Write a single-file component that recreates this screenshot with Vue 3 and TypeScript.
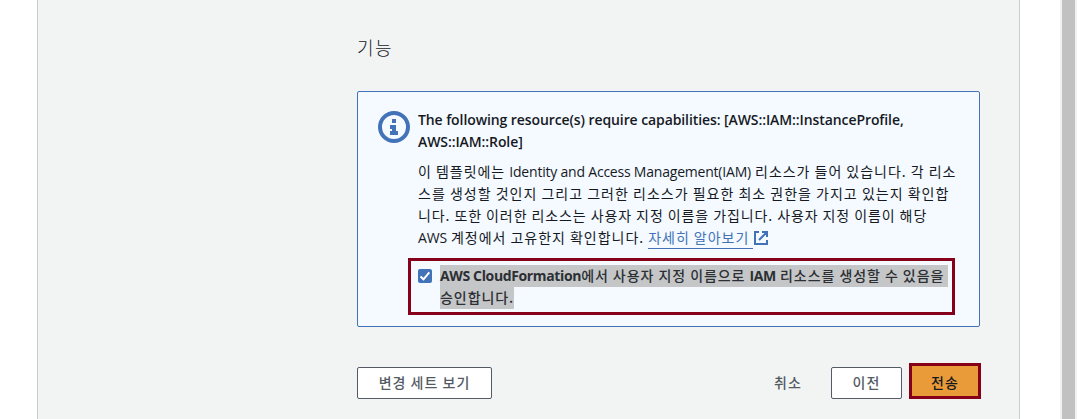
<script setup lang="ts">
interface Run {
  text: string
  latin?: boolean
}

const heading: string[] = [
  'The following resource(s) require capabilities: [AWS::IAM::InstanceProfile,',
  'AWS::IAM::Role]',
]

const lines: Run[][] = [
  [{ text: '이 템플릿에는 ' }, { text: 'Identity and Access Management(IAM)', latin: true }, { text: ' 리소스가 들어 있습니다. 각 리소' }],
  [{ text: '스를 생성할 것인지 그리고 그러한 리소스가 필요한 최소 권한을 가지고 있는지 확인합' }],
  [{ text: '니다. 또한 이러한 리소스는 사용자 지정 이름을 가집니다. 사용자 지정 이름이 해당' }],
]
</script>

<template>
  <div class="page">
    <main class="panel">
      <h2 class="title">기능</h2>

      <section class="alert">
        <svg class="info" width="32" height="32" viewBox="0 0 32 32">
          <circle cx="16" cy="16" r="14" fill="none" stroke="#4273b8" stroke-width="4" />
          <path d="M14 8h4v4h-4zM12 14h6v6h2v4h-8v-4h2v-2h-2z" fill="#4273b8" />
        </svg>
        <div class="body">
          <div class="heading">
            <div v-for="line in heading" :key="line">{{ line }}</div>
          </div>
          <div class="copy">
            <div v-for="(line, i) in lines" :key="i" class="line">
              <span v-for="(run, j) in line" :key="j" :class="{ latin: run.latin }">{{ run.text }}</span>
            </div>
            <div class="line">
              <span class="aws">AWS</span><span> 계정에서 고유한지 확인합니다. </span><a class="more">자세히 알아보기</a><svg class="external" width="14" height="14" viewBox="0 0 14 14">
                <path d="M5 1H1v12h12V9M8 1h5v5M13 1L5 9" fill="none" stroke="#4273b8" stroke-width="2" />
              </svg>
            </div>
          </div>
          <label class="ack">
            <span class="box">
              <svg width="14" height="14" viewBox="0 0 14 14">
                <path d="M2.5 7.5L5.5 10.3L11.3 3.3" fill="none" stroke="#fff" stroke-width="2" />
              </svg>
            </span>
            <span class="ack-text">
              <span class="mark"><span class="lift"><b class="cf">AWS CloudFormation</b>에서 사용자 지정 이름으로 <b class="iam">IAM</b> 리소스를 생성할 수 있음을 </span></span>
              <span class="mark"><span class="lift">승인합니다.</span></span>
            </span>
          </label>
        </div>
      </section>

      <footer class="actions">
        <button class="btn view">변경 세트 보기</button>
        <button class="btn cancel">취소</button>
        <button class="btn prev">이전</button>
        <button class="btn submit">전송</button>
      </footer>
    </main>
    <div class="scrollbar"><div class="thumb"></div></div>
  </div>
</template>

<style>
body {
  margin: 0;
  overflow: hidden;
  background: #fff;
}
</style>

<style scoped>
.page {
  display: flex;
  justify-content: space-between;
  box-sizing: border-box;
  width: 1077px;
  height: 419px;
  padding-left: 37px;
  overflow: hidden;
  font-family: "Noto Sans CJK KR", sans-serif;
  font-size: 14px;
  line-height: 22px;
  color: #16191f;
}
.panel {
  box-sizing: border-box;
  width: 983px;
  padding: 32px 38px 0 319px;
  border: 1px solid #c8cccc;
  border-width: 0 1px;
  background: #f2f3f3;
}
.title {
  margin: 0 0 29px;
  font-size: 18px;
  font-weight: 300;
  line-height: 30px;
  letter-spacing: 1.5px;
}
.alert {
  display: flex;
  box-sizing: border-box;
  width: 623px;
  height: 236px;
  padding: 17px 0 0 20px;
  border: 1px solid #4273b8;
  border-radius: 2px;
  background: #f4faff;
}
.info {
  flex: none;
  margin: 2px 8px 0 0;
}
.body {
  flex: none;
  width: 550px;
  white-space: pre;
}
.heading {
  font-family: "Open Sans", sans-serif;
  font-weight: 600;
  letter-spacing: -0.09px;
}
.copy {
  margin-top: 7px;
  letter-spacing: 0.97px;
}
.line {
  height: 22px;
}
.line:nth-child(2) {
  letter-spacing: 1px;
}
.line:nth-child(3) {
  letter-spacing: 0.91px;
}
.latin {
  font-family: "Open Sans", sans-serif;
  letter-spacing: -0.21px;
}
.aws {
  font-family: "Open Sans", sans-serif;
  letter-spacing: -0.2px;
}
.more {
  display: inline-block;
  box-sizing: border-box;
  height: 23px;
  padding-right: 4px;
  border-bottom: 1px solid #4273b8;
  color: #4273b8;
  vertical-align: top;
}
.external {
  margin-left: 1px;
  vertical-align: -2px;
}
.ack {
  display: flex;
  box-sizing: border-box;
  width: 547px;
  height: 57px;
  margin: 10px 0 0 -10px;
  padding: 4px 0 0 7px;
  border: 3px solid #86001a;
  outline: 1px solid #86001a70;
  outline-offset: -1px;
}
.box {
  flex: none;
  width: 14px;
  height: 14px;
  margin: 4px 8px 0 0;
  border-radius: 2px;
  background: #4273b8;
}
.box svg {
  display: block;
}
.ack-text {
  display: flex;
  flex-direction: column;
  align-items: flex-start;
  font-weight: 500;
  letter-spacing: 0.94px;
  color: #2c2f34;
}
.mark {
  height: 22px;
  background: #c4c6c7;
}
.lift {
  display: block;
  margin-top: -1px;
}
.cf,
.iam {
  font-family: "Open Sans", sans-serif;
  font-weight: 700;
  letter-spacing: -0.36px;
}
.actions {
  display: flex;
  align-items: center;
  width: 624px;
  height: 36px;
  margin-top: 36px;
}
.btn {
  box-sizing: border-box;
  height: 32px;
  margin: 3px 0 0;
  padding: 0 0 2px;
  border: 1px solid #545b64;
  border-radius: 2px;
  background: #fff;
  font: 500 14px/28px "Noto Sans CJK KR", sans-serif;
  letter-spacing: 1px;
  color: #545b64;
}
.view {
  width: 135px;
}
.cancel {
  width: 68px;
  margin-left: auto;
  border-color: transparent;
  background: transparent;
}
.prev {
  width: 71px;
  margin-left: 9px;
}
.submit {
  width: 72px;
  height: 36px;
  margin: 0 0 0 7px;
  padding: 2px 0 0;
  border: 3px solid #86001a;
  border-radius: 0;
  background: #e99b39;
  color: #16191f;
}
.scrollbar {
  box-sizing: border-box;
  width: 17px;
  padding: 0 2px;
  background: #f1f1f1;
}
.thumb {
  height: 100%;
  background: #c1c1c1;
}
</style>
